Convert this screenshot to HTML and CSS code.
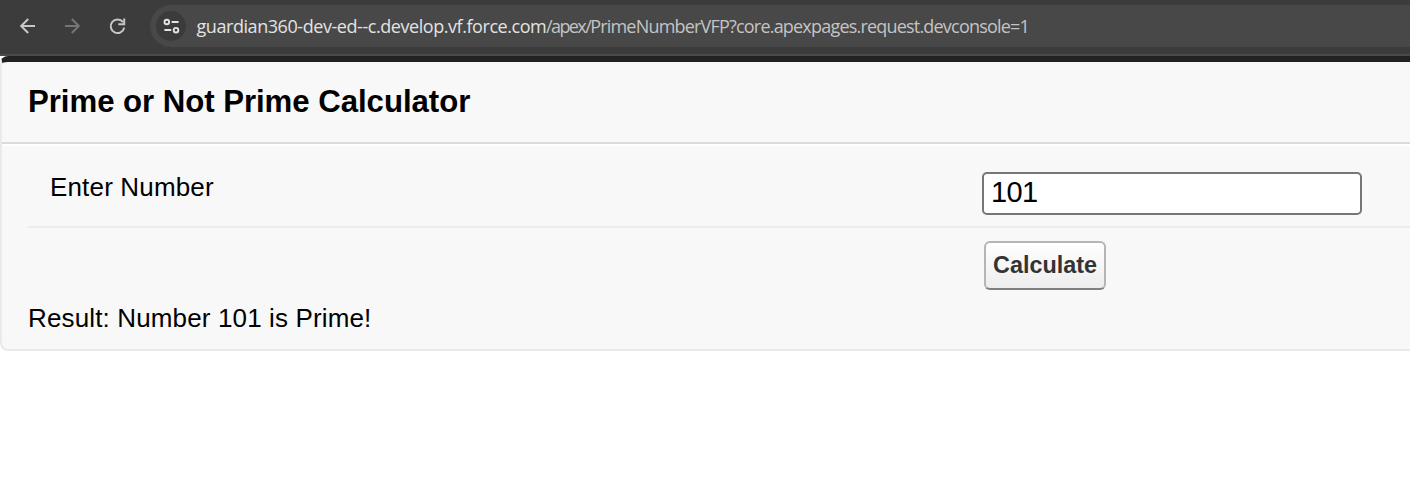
FILE: index.html
```html
<!DOCTYPE html>
<html lang="en">
<head>
<meta charset="utf-8">
<title>Prime or Not Prime Calculator</title>
<link rel="stylesheet" href="styles.css">
</head>
<body>
<header class="toolbar">
  <nav class="nav">
    <svg class="nav-icon" viewBox="0 0 20 20"><path d="M18 10H4M11.2 3 4.2 10l7 7"/></svg>
    <svg class="nav-icon nav-icon-off" viewBox="0 0 20 20"><path d="M3 10h14M9.8 3l7 7-7 7"/></svg>
    <svg class="nav-icon" viewBox="0 0 20 20"><path d="M16 6.2A6.8 6.8 0 1 0 17.2 11.6"/><path d="M17.2 2.4v5.9h-5.9"/></svg>
  </nav>
  <div class="address">
    <span class="site-info">
      <svg class="site-icon" viewBox="0 0 18 18"><circle cx="4.8" cy="5" r="2.3"/><path d="M9.6 5h7M2.4 13h6.8"/><circle cx="14" cy="13.2" r="2.3"/></svg>
    </span>
    <span class="url"><span class="host">guardian360-dev-ed--c.develop.vf.force.com</span><span class="path"><span class="folder">/apex/</span>PrimeNumberVFP?core.apexpages.request.devconsole=1</span></span>
  </div>
</header>
<main class="block">
  <h1 class="block-title">Prime or Not Prime Calculator</h1>
  <form class="block-body">
    <div class="row">
      <label class="label" for="number">Enter Number</label>
      <input class="field" id="number" type="text" value="101">
    </div>
    <div class="actions"><button class="btn" type="button">Calculate</button></div>
    <output class="result">Result: Number 101 is Prime!</output>
  </form>
</main>
</body>
</html>
```
FILE: styles.css
```css
* { box-sizing: border-box; }

body {
  margin: 0;
  background: #fff;
  color: #000;
  font: 26px/30px "Liberation Sans", Arial, sans-serif;
  overflow: hidden;
}

.toolbar {
  display: flex;
  height: 56px;
  padding-top: 5px;
  background: linear-gradient(#3c3c3c, #3c3c3c) 0 0 / 100% 54px no-repeat #4a4a4a;
}

.nav {
  display: flex;
  gap: 25px;
  width: 150px;
  padding: 10.5px 0 0 17px;
}

.nav-icon {
  width: 20px;
  height: 20px;
  fill: none;
  stroke: #c7c7c7;
  stroke-width: 2;
}

.nav-icon-off { stroke: #757575; }

.address {
  display: flex;
  align-items: center;
  flex: 1;
  height: 42px;
  padding-left: 6px;
  border-radius: 21px 0 0 21px;
  background: #484848;
}

.site-info {
  display: flex;
  align-items: center;
  justify-content: center;
  width: 30px;
  height: 30px;
  border-radius: 50%;
  background: #3b3b3b;
}

.site-icon {
  width: 18px;
  height: 18px;
  fill: none;
  stroke: #e3e3e3;
  stroke-width: 1.9;
}

.url {
  display: flex;
  padding-left: 10.5px;
  font: 18px/24px "Open Sans", "Noto Sans", sans-serif;
  white-space: nowrap;
}

.host {
  width: 349.5px;
  color: #e3e3e3;
  letter-spacing: -0.44px;
}

.path {
  color: #c4c4c4;
  letter-spacing: -0.8px;
}

.folder { letter-spacing: -1.6px; }

.block {
  height: 295px;
  margin-right: -20px;
  border: 2px solid #eaeaea;
  border-top: 6px solid #222;
  border-radius: 8px;
  background: #f8f8f8;
}

.block-title {
  height: 82px;
  margin: 0;
  padding: 21px 0 0 26px;
  border-bottom: 2px solid #dbdbdb;
  font-size: 31.2px;
  line-height: 38px;
  letter-spacing: -0.05px;
}

.block-body {
  border-top: 2px solid #fff;
  padding-left: 26px;
}

.row {
  display: flex;
  height: 82px;
  padding: 26px 0 0 22px;
  border-bottom: 2px solid #ececec;
}

.label {
  width: 932px;
  letter-spacing: 0.16px;
}

.field {
  width: 380px;
  height: 43px;
  padding: 0 7px 3px;
  border: 2px solid #767676;
  border-radius: 5px;
  background: #fff;
  color: #000;
  font: 29px "Liberation Sans", Arial, sans-serif;
  letter-spacing: -0.6px;
}

.actions {
  height: 75px;
  padding: 13px 0 0 956px;
}

.btn {
  display: block;
  width: 122px;
  height: 49px;
  padding: 0;
  border: 2px solid #b5b5b5;
  border-bottom-color: #7f7f7f;
  border-radius: 6px;
  background: linear-gradient(#fff, #ededed);
  color: #333;
  font: bold 23.4px "Liberation Sans", Arial, sans-serif;
}

.result {
  display: block;
  letter-spacing: 0.14px;
}
```
